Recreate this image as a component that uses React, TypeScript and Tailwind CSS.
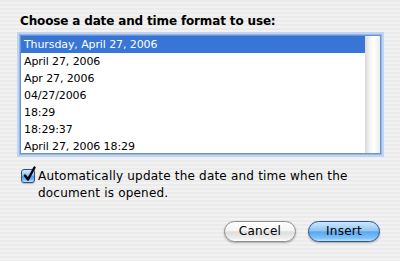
const formats = [
  "Thursday, April 27, 2006",
  "April 27, 2006",
  "Apr 27, 2006",
  "04/27/2006",
  "18:29",
  "18:29:37",
  "April 27, 2006 18:29",
];

const AquaCheckbox = () => (
  <div className="relative w-[14px] h-[14px] shrink-0 mt-[1px]">
    <div className="w-[14px] h-[14px] rounded-[3px] border border-[#2f4f8a] bg-[linear-gradient(to_bottom,#d6ebfd_0%,#8cc2f2_45%,#4e9ce9_55%,#7fc3fb_85%,#c4eaff_100%)] shadow-[0_1px_1px_rgba(0,0,0,0.25)]" />
    <svg className="absolute left-[2px] top-[-3px]" width="14" height="16" viewBox="0 0 14 16">
      <path d="M2 9.5 L5 13.5 L11.5 1.5" fill="none" stroke="#000" strokeWidth="2.4" strokeLinecap="round" strokeLinejoin="round" />
    </svg>
  </div>
);

export default function App() {
  return (
    <div
      className="w-[400px] h-[261px] overflow-hidden pt-[13px] text-black bg-[repeating-linear-gradient(to_bottom,#ebebeb_0px,#ebebeb_2px,#f2f2f2_2px,#f2f2f2_4px)]"
      style={{ fontFamily: '"DejaVu Sans", Verdana, sans-serif' }}
    >
      <div className="pl-[20px] h-[16px] leading-[16px] text-[12px] font-bold tracking-[-0.15px]">
        Choose a date and time format to use:
      </div>

      <div className="ml-[20px] mt-[6px] w-[361px] h-[119px] flex border border-[#6f93cc] bg-white shadow-[0_0_0_1px_#93b6e6,0_0_0_3px_#bfd5f1]">
        <div className="flex-1 flex flex-col">
          {formats.map((f, i) => (
            <div
              key={f}
              className={`h-[17px] leading-[17px] pl-[3px] text-[11px] tracking-[-0.1px] ${
                i === 0 ? "bg-[#3875d7] text-white" : "text-black"
              }`}
            >
              {f}
            </div>
          ))}
        </div>
        <div className="w-[15px] bg-[linear-gradient(to_right,#d9d9d9_0%,#f6f6f6_35%,#ffffff_60%,#ececec_100%)]" />
      </div>

      <div className="flex gap-[3px] pl-[21px] mt-[14px] text-[12px] leading-[17px] tracking-[0.2px]">
        <AquaCheckbox />
        <div>
          Automatically update the date and time when the
          <br />
          document is opened.
        </div>
      </div>

      <div className="flex justify-end gap-[12px] pr-[20px] mt-[19px]">
        <button className="w-[72px] h-[21px] rounded-full border border-[#8c8c8c] text-[12px] tracking-[0.3px] leading-[19px] text-black bg-[linear-gradient(to_bottom,#ffffff_0%,#f5f5f5_45%,#dedede_52%,#eeeeee_85%,#ffffff_100%)] shadow-[0_1px_2px_rgba(0,0,0,0.3)]">
          Cancel
        </button>
        <button className="w-[72px] h-[21px] rounded-full border border-[#2b4f98] text-[12px] tracking-[0.3px] leading-[19px] text-black bg-[linear-gradient(to_bottom,#cfe6fb_0%,#92c6f3_45%,#5ba7ee_52%,#7ec2fa_85%,#bfe8ff_100%)] shadow-[0_1px_2px_rgba(0,0,0,0.3)]">
          Insert
        </button>
      </div>
    </div>
  );
}
